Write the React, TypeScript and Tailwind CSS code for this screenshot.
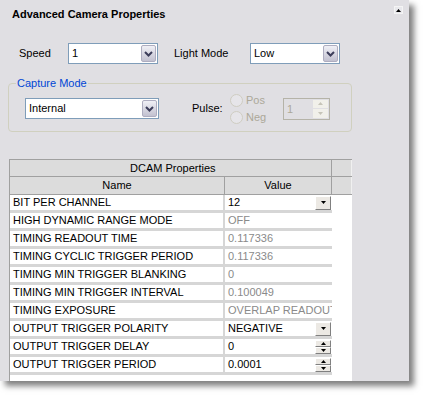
import type { ReactNode } from 'react';

type Row = {
    name: string;
    value: string;
    kind: 'combo' | 'spin' | 'readonly';
};

const rows: Row[] = [
    { name: 'BIT PER CHANNEL', value: '12', kind: 'combo' },
    { name: 'HIGH DYNAMIC RANGE MODE', value: 'OFF', kind: 'readonly' },
    { name: 'TIMING READOUT TIME', value: '0.117336', kind: 'readonly' },
    { name: 'TIMING CYCLIC TRIGGER PERIOD', value: '0.117336', kind: 'readonly' },
    { name: 'TIMING MIN TRIGGER BLANKING', value: '0', kind: 'readonly' },
    { name: 'TIMING MIN TRIGGER INTERVAL', value: '0.100049', kind: 'readonly' },
    { name: 'TIMING EXPOSURE', value: 'OVERLAP READOUT', kind: 'readonly' },
    { name: 'OUTPUT TRIGGER POLARITY', value: 'NEGATIVE', kind: 'combo' },
    { name: 'OUTPUT TRIGGER DELAY', value: '0', kind: 'spin' },
    { name: 'OUTPUT TRIGGER PERIOD', value: '0.0001', kind: 'spin' },
];

function Chevron() {
    return (
        <svg width="9" height="6" viewBox="0 0 9 6">
            <path d="M1 1 L4.5 4.5 L8 1" fill="none" stroke="#3c3d5a" strokeWidth="2" />
        </svg>
    );
}

function Combo({ value, className }: { value: string; className: string }) {
    return (
        <div className={`flex h-[21px] border border-[#7f9db9] bg-white ${className}`}>
            <span className="flex-1 pl-[3px] leading-[19px] text-black">{value}</span>
            <span className="m-px flex w-[15px] items-center justify-center rounded-[2px] border border-[#aeadc0] bg-linear-to-b from-[#f0f0f6] to-[#c2c1d0]">
                <Chevron />
            </span>
        </div>
    );
}

function Radio({ label }: { label: string }) {
    return (
        <div className="flex h-[13px] items-center gap-[3px]">
            <span className="h-[13px] w-[13px] rounded-full border border-[#cfcdc2] bg-[#e6e5e9]" />
            <span className="text-[#aca899]">{label}</span>
        </div>
    );
}

function Arrow({ up, color = '#000' }: { up?: boolean; color?: string }) {
    return (
        <svg width="5" height="3" viewBox="0 0 5 3">
            <path d={up ? 'M0 3 L2.5 0 L5 3 Z' : 'M0 0 L2.5 3 L5 0 Z'} fill={color} />
        </svg>
    );
}

function ClassicButton({ children, className }: { children: ReactNode; className: string }) {
    return (
        <span className={`flex items-center justify-center border border-t-white border-l-white border-r-[#808080] border-b-[#808080] bg-[#ece9e4] ${className}`}>
            {children}
        </span>
    );
}

function ValueCell({ row }: { row: Row }) {
    const muted = row.kind === 'readonly';
    return (
        <div className="flex flex-1 items-center overflow-hidden bg-white">
            <span className={`flex-1 whitespace-nowrap pl-[3px] ${muted ? 'text-[#8a8a8a]' : 'text-black'}`}>{row.value}</span>
            {row.kind === 'combo' && (
                <ClassicButton className="mr-px h-[14px] w-[16px]">
                    <Arrow />
                </ClassicButton>
            )}
            {row.kind === 'spin' && (
                <span className="mr-px flex flex-col">
                    <ClassicButton className="h-[7px] w-[16px]">
                        <Arrow up />
                    </ClassicButton>
                    <ClassicButton className="h-[7px] w-[16px]">
                        <Arrow />
                    </ClassicButton>
                </span>
            )}
        </div>
    );
}

export default function App() {
    return (
        <div className="h-[397px] w-[425px] overflow-hidden bg-white font-['Liberation_Sans',Arial,sans-serif] text-[11px] leading-[13px] text-black">
            <div className="relative flex h-[381px] w-[409px] flex-col bg-[#e0dfe3] shadow-[5px_5px_6px_rgba(0,0,0,0.5)]">
                <h2 className="pl-[12px] pt-[8px] font-bold">Advanced Camera Properties</h2>
                <span className="absolute right-[6px] top-[6px] flex h-[8px] w-[9px] items-center justify-center border border-[#f4f4f4] bg-[#e8e8ec]">
                    <Arrow up />
                </span>

                <div className="mt-[22px] flex items-center">
                    <span className="w-[68px] pl-[19px]">Speed</span>
                    <Combo value="1" className="w-[90px]" />
                    <span className="ml-[16px] w-[76px]">Light Mode</span>
                    <Combo value="Low" className="w-[90px]" />
                </div>

                <fieldset className="mx-[8px] mt-[13px] w-[344px] rounded-[4px] border border-[#d0d0bf] pb-[7px]">
                    <legend className="ml-[7px] px-px text-[#0046d5]">Capture Mode</legend>
                    <div className="mt-[3px] flex h-[31px] items-center">
                        <Combo value="Internal" className="ml-[16px] w-[134px]" />
                        <span className="ml-[33px] w-[38px]">Pulse:</span>
                        <div className="flex w-[53px] flex-col gap-[4px]">
                            <Radio label="Pos" />
                            <Radio label="Neg" />
                        </div>
                        <div className="flex h-[22px] w-[47px] border border-[#b5b3a8]">
                            <span className="flex-1 pl-[3px] leading-[20px] text-[#aca899]">1</span>
                            <span className="my-px mr-px flex w-[15px] flex-col gap-px">
                                <span className="flex flex-1 items-center justify-center bg-[#f1f0ea]">
                                    <Arrow up color="#c6c4b8" />
                                </span>
                                <span className="flex flex-1 items-center justify-center bg-[#f1f0ea]">
                                    <Arrow color="#c6c4b8" />
                                </span>
                            </span>
                        </div>
                    </div>
                </fieldset>

                <div className="ml-[9px] mt-[27px] flex w-[343px] flex-1 flex-col overflow-hidden border-l border-t border-[#a0a0a0] bg-white">
                    <div className="flex h-[17px] border-b border-[#a0a0a0] bg-[#dcdcdc]">
                        <span className="w-[322px] border-r border-[#a0a0a0] pl-[120px] leading-[16px]">DCAM Properties</span>
                        <span className="flex-1 border-r border-[#f0f0f0]" />
                    </div>
                    <div className="flex h-[18px] border-b border-[#a0a0a0] bg-[#dcdcdc] leading-[17px]">
                        <span className="w-[215px] border-r border-[#a0a0a0] text-center">Name</span>
                        <span className="w-[107px] border-r border-[#a0a0a0] text-center">Value</span>
                        <span className="flex-1 border-r border-[#f0f0f0]" />
                    </div>
                    {rows.map((row) => (
                        <div key={row.name} className="flex h-[18px] w-[322px] shrink-0 gap-[2px] bg-[#d6d6d6] pb-[3px]">
                            <span className="w-[213px] bg-white pl-[3px] leading-[15px]">{row.name}</span>
                            <ValueCell row={row} />
                        </div>
                    ))}
                </div>
            </div>
        </div>
    );
}
